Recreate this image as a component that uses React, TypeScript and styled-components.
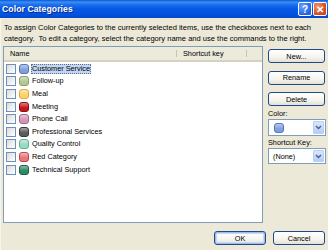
import React from "react";
import styled, { createGlobalStyle, css } from "styled-components";

const Global = createGlobalStyle`
  html, body { margin: 0; padding: 0; }
  body {
    width: 328px; height: 250px; overflow: hidden;
    background: #ece9d8;
    font-family: "Liberation Sans", Arial, sans-serif;
    font-size: 7.3px;
    color: #000;
  }
`;

const Window = styled.div`
  width: 328px;
  height: 250px;
  display: flex;
  flex-direction: column;
  background: #ece9d8;
  border-left: 1px solid #f6f4ec;
  box-sizing: border-box;
`;

const TitleBar = styled.div`
  height: 18px;
  flex: none;
  display: flex;
  align-items: center;
  justify-content: space-between;
  padding: 0 1px 0 2px;
  margin-left: -1px;
  background: linear-gradient(
    to bottom,
    #0a5ad8 0%,
    #3c8ff5 12%,
    #1f70ec 25%,
    #0558e6 50%,
    #0352e0 80%,
    #0449c8 100%
  );
`;

const Title = styled.span`
  color: #fff;
  font-weight: bold;
  font-size: 8.6px;
  text-shadow: 1px 1px 0 #0a2a88;
  letter-spacing: 0.1px;
`;

const Caps = styled.div`
  display: flex;
  gap: 1px;
`;

const CapButton = styled.div<{ $kind: "help" | "close" }>`
  width: 14px;
  height: 14px;
  border: 1px solid #fff;
  border-radius: 2px;
  box-sizing: border-box;
  display: flex;
  align-items: center;
  justify-content: center;
  color: #fff;
  font-weight: bold;
  font-size: 10px;
  ${(p) =>
    p.$kind === "help"
      ? css`background: radial-gradient(circle at 30% 30%, #6aa2ff, #2563e6 70%);`
      : css`background: radial-gradient(circle at 30% 30%, #f0956e, #d6461c 70%);`}
`;

const Body = styled.div`
  flex: 1;
  display: flex;
  flex-direction: column;
  padding: 4px 2px 5px 2px;
  min-height: 0;
`;

const Intro = styled.p`
  margin: 0 0 2px 1px;
  line-height: 11px;
  font-size: 7.55px;
  white-space: nowrap;
`;

const Main = styled.div`
  display: flex;
  gap: 5px;
  height: 177px;
`;

const ListBox = styled.div`
  width: 260px;
  border: 1px solid #7f9db9;
  background: #fff;
  box-sizing: border-box;
  display: flex;
  flex-direction: column;
`;

const Header = styled.div`
  height: 15px;
  flex: none;
  display: grid;
  grid-template-columns: 173px 70px 1fr;
  background: #ebeadb;
  border-bottom: 2px solid #d6d2c2;
  box-sizing: border-box;
`;

const HeaderCell = styled.div<{ $last?: boolean }>`
  display: flex;
  align-items: center;
  padding-left: 6px;
  position: relative;
  ${(p) =>
    !p.$last &&
    css`
      &::after {
        content: "";
        position: absolute;
        right: 0;
        top: 3px;
        bottom: 3px;
        width: 1px;
        background: #c7c5b2;
      }
    `}
`;

const Rows = styled.div`
  display: flex;
  flex-direction: column;
  padding-top: 0.5px;
`;

const Row = styled.div`
  height: 12.6px;
  display: flex;
  align-items: center;
  padding-left: 2px;
  gap: 2px;
`;

const Check = styled.span`
  width: 10px;
  height: 10px;
  border: 1px solid #6c8fbd;
  background: linear-gradient(135deg, #dcdcd5, #fff);
  flex: none;
  box-sizing: border-box;
`;

const Swatch = styled.span<{ $fill: string; $edge: string }>`
  width: 10px;
  height: 10px;
  border-radius: 3px;
  border: 1px solid ${(p) => p.$edge};
  background: linear-gradient(to bottom, rgba(255,255,255,0.45), rgba(255,255,255,0) 60%), ${(p) => p.$fill};
  box-sizing: border-box;
  flex: none;
  margin-left: 1px;
`;

const Label = styled.span<{ $sel?: boolean }>`
  padding: 0 1px;
  line-height: 10px;
  ${(p) =>
    p.$sel &&
    css`
      background: #c3d5f3;
      outline: 1px dotted #5a6f95;
      outline-offset: -1px;
    `}
`;

const Side = styled.div`
  width: 58px;
  display: flex;
  flex-direction: column;
  padding-top: 3px;
`;

const Btn = styled.div<{ $default?: boolean }>`
  height: 14px;
  width: 57px;
  box-sizing: border-box;
  border: 1px solid #1f4a86;
  border-radius: 3px;
  background: linear-gradient(to bottom, #ffffff 0%, #f5f4ee 60%, #e3e1d6 100%);
  display: flex;
  align-items: center;
  justify-content: center;
  flex: none;
  ${(p) =>
    p.$default &&
    css`
      box-shadow: inset 0 0 0 1px #9fbcec, inset 0 0 0 2px #c8d8f5;
    `}
`;

const SideButtons = styled.div`
  display: flex;
  flex-direction: column;
  gap: 7.5px;
`;

const FieldLabel = styled.div<{ $top: number }>`
  line-height: 9px;
  margin: ${(p) => p.$top}px 0 1px 0;
`;

const Combo = styled.div<{ $h: number }>`
  height: ${(p) => p.$h}px;
  width: 58px;
  box-sizing: border-box;
  border: 1px solid #7f9db9;
  background: #fff;
  display: flex;
  align-items: center;
  padding: 1px;
`;

const ComboValue = styled.div`
  flex: 1;
  display: flex;
  align-items: center;
  padding-left: 3px;
`;

const Drop = styled.div`
  width: 11px;
  align-self: stretch;
  box-sizing: border-box;
  border: 1px solid #b9cdf5;
  border-radius: 1px;
  background: linear-gradient(to bottom, #dbe6fd, #b6cbf7);
  display: flex;
  align-items: center;
  justify-content: center;
`;

const Footer = styled.div`
  margin-top: auto;
  display: flex;
  justify-content: flex-end;
  gap: 7px;
  padding-right: 1px;
`;

const FootBtn = styled(Btn)`
  width: 52px;
`;

const Chevron = () => (
  <svg width="7" height="5" viewBox="0 0 7 5">
    <path d="M1 1 L3.5 3.5 L6 1" fill="none" stroke="#4d6185" strokeWidth="1.4" />
  </svg>
);

const categories: { name: string; fill: string; edge: string }[] = [
  { name: "Customer Service", fill: "#7f9fde", edge: "#5677b8" },
  { name: "Follow-up", fill: "#b3c796", edge: "#8aa06b" },
  { name: "Meal", fill: "#fcd26a", edge: "#dfa93b" },
  { name: "Meeting", fill: "#c4161c", edge: "#8c0e12" },
  { name: "Phone Call", fill: "#d496b8", edge: "#a6668a" },
  { name: "Professional Services", fill: "#5b5b5b", edge: "#3a3a3a" },
  { name: "Quality Control", fill: "#98d9c2", edge: "#5fb396" },
  { name: "Red Category", fill: "#e6787c", edge: "#c2474d" },
  { name: "Technical Support", fill: "#2b8a62", edge: "#1a6245" },
];

export default function App() {
  return (
    <>
      <Global />
      <Window>
        <TitleBar>
          <Title>Color Categories</Title>
          <Caps>
            <CapButton $kind="help">?</CapButton>
            <CapButton $kind="close">✕</CapButton>
          </Caps>
        </TitleBar>
        <Body>
          <Intro>
            To assign Color Categories to the currently selected items, use the checkboxes next to each
            <br />
            category.&nbsp; To edit a category, select the category name and use the commands to the right.
          </Intro>
          <Main>
            <ListBox>
              <Header>
                <HeaderCell>Name</HeaderCell>
                <HeaderCell>Shortcut key</HeaderCell>
                <HeaderCell $last />
              </Header>
              <Rows>
                {categories.map((c, i) => (
                  <Row key={c.name}>
                    <Check />
                    <Swatch $fill={c.fill} $edge={c.edge} />
                    <Label $sel={i === 0}>{c.name}</Label>
                  </Row>
                ))}
              </Rows>
            </ListBox>
            <Side>
              <SideButtons>
                <Btn>New...</Btn>
                <Btn>Rename</Btn>
                <Btn>Delete</Btn>
              </SideButtons>
              <FieldLabel $top={3}>Color:</FieldLabel>
              <Combo $h={17}>
                <ComboValue>
                  <Swatch $fill="#7f9fde" $edge="#5677b8" />
                </ComboValue>
                <Drop>
                  <Chevron />
                </Drop>
              </Combo>
              <FieldLabel $top={2}>Shortcut Key:</FieldLabel>
              <Combo $h={16}>
                <ComboValue>(None)</ComboValue>
                <Drop>
                  <Chevron />
                </Drop>
              </Combo>
            </Side>
          </Main>
          <Footer>
            <FootBtn $default>OK</FootBtn>
            <FootBtn>Cancel</FootBtn>
          </Footer>
        </Body>
      </Window>
    </>
  );
}
